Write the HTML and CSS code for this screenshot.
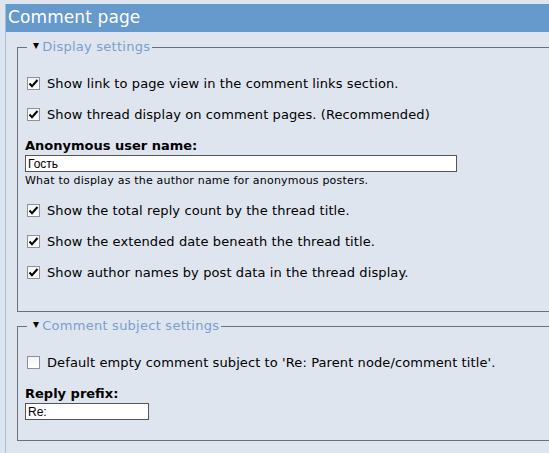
FILE: index.html
```html
<!DOCTYPE html>
<html lang="en">
<head>
  <meta charset="UTF-8">
  <title>Comment page</title>
  <link rel="stylesheet" href="styles.css">
</head>
<body>

<!-- Comment settings block -->
<div class="block">
  <h2 class="block-title">Comment page</h2>

  <fieldset class="group">
    <legend><span class="arrow">&#9662;</span>Display settings</legend>

    <div class="check-row">
      <span class="box"><svg width="13" height="13" viewBox="0 0 13 13"><path d="M2.5 6.5 L5 9.2 L10.5 3" fill="none" stroke="#000" stroke-width="2"/></svg></span>
      <span>Show link to page view in the comment links section.</span>
    </div>
    <div class="check-row">
      <span class="box"><svg width="13" height="13" viewBox="0 0 13 13"><path d="M2.5 6.5 L5 9.2 L10.5 3" fill="none" stroke="#000" stroke-width="2"/></svg></span>
      <span>Show thread display on comment pages. (Recommended)</span>
    </div>

    <div class="text-item">
      <label class="field-label">Anonymous user name:</label>
      <input type="text" class="field wide" value="Гость">
      <div class="desc">What to display as the author name for anonymous posters.</div>
    </div>

    <div class="check-row">
      <span class="box"><svg width="13" height="13" viewBox="0 0 13 13"><path d="M2.5 6.5 L5 9.2 L10.5 3" fill="none" stroke="#000" stroke-width="2"/></svg></span>
      <span>Show the total reply count by the thread title.</span>
    </div>
    <div class="check-row">
      <span class="box"><svg width="13" height="13" viewBox="0 0 13 13"><path d="M2.5 6.5 L5 9.2 L10.5 3" fill="none" stroke="#000" stroke-width="2"/></svg></span>
      <span>Show the extended date beneath the thread title.</span>
    </div>
    <div class="check-row">
      <span class="box"><svg width="13" height="13" viewBox="0 0 13 13"><path d="M2.5 6.5 L5 9.2 L10.5 3" fill="none" stroke="#000" stroke-width="2"/></svg></span>
      <span>Show author names by post data in the thread display.</span>
    </div>
  </fieldset>

  <fieldset class="group second">
    <legend><span class="arrow">&#9662;</span>Comment subject settings</legend>

    <div class="check-row">
      <span class="box"></span>
      <span>Default empty comment subject to 'Re: Parent node/comment title'.</span>
    </div>

    <div class="text-item">
      <label class="field-label">Reply prefix:</label>
      <input type="text" class="field short" value="Re:">
    </div>
  </fieldset>
</div>

</body>
</html>
```

FILE: styles.css
```css
body {
  margin: 0;
  background: #dfe5ef;
  font-family: "DejaVu Sans", Verdana, sans-serif;
  font-size: 13px;
  color: #000;
  overflow: hidden;
}
.block {
  margin: 4px 0 0 5px;
  border-left: 1px solid #a6bfe0;
  width: 620px;
  padding-bottom: 20px;
}
.block-title {
  margin: 0;
  height: 28px;
  line-height: 27px;
  padding-left: 2px;
  background: #6699cc;
  color: #fff;
  font-size: 17px;
  font-weight: normal;
  letter-spacing: 0.1px;
}
.group {
  margin: 7px 0 0 11px;
  padding: 19px 0 17px 7px;
  border: 1px solid #6b7080;
  border-right: none;
}
.group.second {
  margin-top: 6px;
  padding-bottom: 20px;
}
.group legend {
  margin-left: 2px;
  padding: 0 2px 0 6px;
  color: #7a9fcc;
  font-size: 13px;
  line-height: 16px;
  letter-spacing: 0.25px;
}
.arrow {
  color: #000;
  font-size: 12px;
  margin-right: 3px;
  position: relative;
  top: -2px;
}
.check-row {
  display: flex;
  align-items: center;
  height: 18px;
  margin-bottom: 13px;
  padding-left: 2px;
  letter-spacing: 0.1px;
}
.box {
  width: 11px;
  height: 11px;
  border: 1px solid #8c929c;
  background: linear-gradient(#f4f4f4, #fff);
  margin-right: 7px;
  flex: none;
  position: relative;
}
.box svg {
  position: absolute;
  left: -1px;
  top: -1px;
}
.text-item {
  margin-top: 15px;
  margin-bottom: 13px;
}
.second .text-item {
  margin-top: 15px;
  margin-bottom: 0;
}
.field-label {
  display: block;
  font-weight: bold;
  line-height: 16px;
}
.field {
  display: block;
  box-sizing: border-box;
  height: 17px;
  margin: 1px 0 0;
  padding: 0 2px;
  border: 1px solid #555;
  background: #fff;
  font-family: "Liberation Sans", Arial, sans-serif;
  font-size: 12px;
}
.wide { width: 432px; }
.short { width: 124px; }
.desc {
  font-size: 11px;
  line-height: 14px;
  margin-top: 2px;
  letter-spacing: 0.2px;
}
```
